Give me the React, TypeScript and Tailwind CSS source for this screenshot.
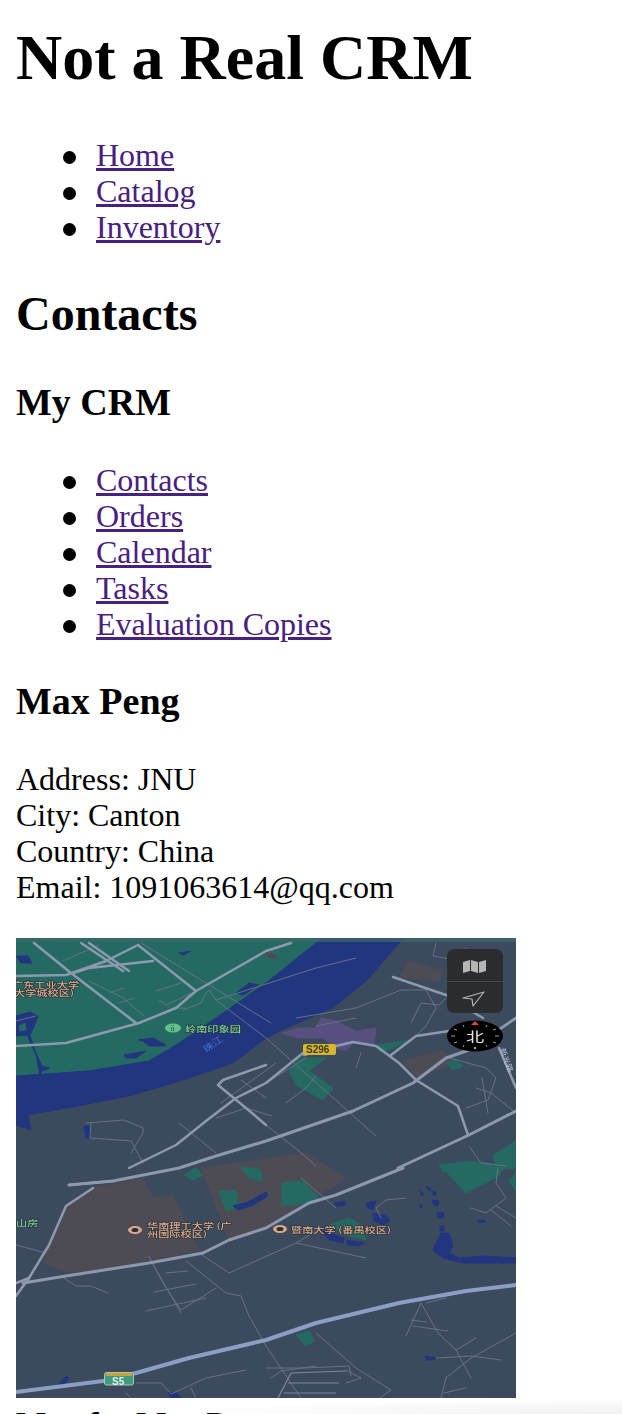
const LINK = "text-[#48207f] underline";
const LI = "relative before:absolute before:top-[14px] before:left-[-33px] before:h-[13px] before:w-[13px] before:rounded-full before:bg-black before:content-['']";

const Roads = ({ d, w = 1, c = "#667285" }: { d: string[]; w?: number; c?: string }) => (
  <g fill="none" stroke={c} strokeWidth={w} strokeLinecap="round" strokeLinejoin="round">
    {d.map((p, i) => (
      <polyline key={i} points={p} />
    ))}
  </g>
);

const Fill = ({ d, c }: { d: string[]; c: string }) => (
  <g fill={c} stroke={c} strokeWidth="1" strokeLinejoin="round">
    {d.map((p, i) => (
      <polygon key={i} points={p} />
    ))}
  </g>
);

const Label = ({ x, y, t, c = "#dcae8c", s = 8 }: { x: number; y: number; t: string; c?: string; s?: number }) => (
  <text
    transform={`translate(${x} ${y}) scale(1.4 1)`}
    fontSize={s}
    fontWeight={500}
    fill={c}
    stroke="#2b3038"
    strokeWidth={1.1}
    paintOrder="stroke"
    className="font-['Noto_Sans_CJK_SC','Noto_Sans',sans-serif]"
  >
    {t}
  </text>
);

function MapPicture() {
  return (
    <svg viewBox="0 0 500 460" className="block h-[460px] w-[500px]">
      <rect width="500" height="460" fill="#3c4a5e" />
      <Fill
        c="#256a62"
        d={[
          "0,0 305,0 300,5 250,45 200,80 160,107 133,123 73,133 0,138",
          "283,120 310,120 293,133 317,150 307,162 280,147 273,133",
          "362,107 393,102 373,112 364,114",
          "477,217 500,203 500,230 480,228",
          "423,227 457,223 500,230 427,234",
        ]}
      />
      <Fill
        c="#4d4c55"
        d={[
          "127,240 137,260 157,258 183,313 133,323 57,335 27,325 50,268 77,250",
          "185,230 290,215 330,240 250,290 212,300 200,268",
          "393,23 427,33 423,43 383,40",
          "387,123 427,113 440,125 400,140",
          "250,14 262,18 258,21 250,18",
        ]}
      />
      <Fill
        c="#256a62"
        d={[
          "427,230 487,230 483,238 450,255",
          "493,243 500,235 500,253",
          "313,287 333,280 345,287 350,302 333,298",
          "280,397 293,393 298,403 290,408",
          "168,237 180,230 187,237 177,242",
          "203,253 220,253 223,270 210,273",
          "225,230 243,230 247,243 233,240",
          "266,245 287,243 303,260 283,267 266,267",
          "430,125 440,122 447,128 437,132",
        ]}
      />
      <Fill
        c="#574f80"
        d={[
          "305,80 320,83 340,93 360,90 358,107 337,105 330,113 320,110 307,100 283,100 265,95 283,90 300,90",
        ]}
      />
      <Fill
        c="#22357f"
        d={[
          "0,138 73,133 133,123 160,107 200,80 250,45 300,5 305,0 390,0 383,5 350,43 317,70 270,90 250,100 217,125 167,142 117,157 67,167 12,177 15,192 0,187",
          "0,78 14,74 22,78 19,86 14,97 19,113 26,128 34,130 26,133 24,137 20,117 11,97 0,98",
          "108,117 130,113 120,120 110,120",
          "122,102 137,100 150,107 147,108 133,108 127,103",
          "220,55 233,45 243,47 227,57",
          "163,15 175,13 167,17",
          "68,188 73,188 75,200 70,200",
          "42,447 50,438 53,440 48,447 40,448",
          "417,312 425,295 433,295 437,308 433,315 443,320 467,318 500,320 500,325 477,325 447,325 427,320",
          "357,275 370,278 374,283 367,287 358,283",
          "350,265 360,263 357,272 352,270",
          "319,265 330,263 328,268 320,268",
          "307,293 328,300 327,305 313,302",
          "330,302 348,305 343,308 332,307",
          "409,418 421,420 416,422 410,422",
          "410,248 415,250 413,253",
          "415,253 421,255 418,258",
          "416,262 423,263 422,268 418,267",
          "421,274 428,275 428,280 422,280",
          "424,288 428,288 428,293 424,293",
          "404,253 408,256 406,258",
          "403,266 407,268 404,270",
          "461,282 470,283 465,285",
          "217,268 232,264 250,254 252,258 235,268 222,272",
          "152,454 162,456 165,460 155,460",
          "0,18 12,18 16,25 5,25",
        ]}
      />
      <Fill c="#256a62" d={["3,88 9,85 10,92 4,93"]} />
      <rect width="500" height="4" fill="#3a6a6c" opacity="0.75" />

      <Roads
        d={[
          "125,5 255,85",
          "47,23 83,7",
          "73,43 107,60 128,78",
          "93,55 108,50",
          "103,65 118,60",
          "140,53 165,45",
          "143,62 150,67 165,60 175,55 160,70 170,70",
          "167,72 185,65 190,55 193,52 200,62 250,100 360,198",
          "200,62 300,30 340,20",
          "70,185 108,182 127,190 127,195 115,215",
          "75,185 74,200 115,203 127,225",
          "163,185 200,215",
          "250,145 290,120",
          "205,165 260,125",
          "225,142 250,160",
          "200,180 230,170 256,178",
          "250,187 283,213 300,228",
          "280,80 340,70 385,52 410,52 420,70 410,88 400,98",
          "300,88 340,80",
          "270,165 290,150 300,138",
          "340,130 345,115",
          "395,85 405,65 423,67 430,60",
          "420,5 417,18 440,22 450,10",
          "434,120 470,130 480,140 472,162 450,170",
          "466,140 472,175",
          "460,150 475,155 500,175",
          "453,208 465,225 490,228",
          "0,83 20,78",
          "0,307 30,315",
          "48,340 60,348 75,348 92,355",
          "133,318 135,323 165,375",
          "135,323 150,350 165,372 200,350",
          "138,354 180,346",
          "130,373 190,360",
          "150,335 172,333",
          "170,323 210,355 225,358 233,378 250,408",
          "183,315 213,335 280,305 305,290",
          "280,305 350,320",
          "250,408 285,460",
          "250,430 280,430 290,430 333,428 335,438",
          "300,395 340,430 375,452 350,470",
          "405,365 422,395 440,412 455,440",
          "405,365 390,398",
          "410,365 430,360",
          "395,382 410,384",
          "397,388 432,393",
          "440,412 460,400",
          "455,420 500,395",
          "420,420 455,418 485,422",
          "455,420 430,440 425,460",
          "428,455 450,450",
          "110,455 115,460",
          "120,445 145,445 155,456 190,440 230,432",
          "175,450 180,460",
          "255,440 265,433 300,428",
          "330,445 345,440 330,432",
          "482,230 480,245 490,260 470,275 455,270",
          "480,268 500,280",
          "475,272 495,288",
          "285,240 320,270",
          "390,260 370,262 360,270 365,280",
        ]}
      />
      <g fill="none" stroke="#7c889b" strokeWidth="1.2">
        <polyline points="262,460 275,435 330,433" />
        <polyline points="268,455 320,455" />
        <polyline points="272,445 323,445" />
      </g>
      <Roads
        w={2.5}
        c="#8d99ad"
        d={[
          "0,108 50,105 123,85 160,70 180,53 250,13 275,5",
          "0,38 50,37 90,23 122,7",
          "18,5 55,35 120,85",
          "57,35 73,30 137,23",
          "65,5 107,33",
          "73,5 113,33",
          "122,7 180,53",
          "250,127 207,142 202,147 230,170 250,187",
          "287,115 250,145 220,160 190,183 160,207 113,230",
          "288,117 320,108 337,104 360,108 383,125 400,142 442,168 452,197",
          "375,117 400,98 433,93 460,92",
          "377,39 433,58",
          "467,80 450,70",
          "483,110 500,150",
          "0,358 13,340 33,307 50,268 77,250",
          "53,247 97,243",
          "0,345 13,340",
        ]}
      />
      <Roads
        w={3}
        c="#8b98ae"
        d={[
          "7,345 50,338 133,325 187,315 213,302 250,290 293,265 320,257 387,230",
          "53,247 97,243 163,230 200,218 250,203 337,173 397,145 430,120 453,112 500,80",
          "382,230 453,197 500,173",
        ]}
      />
      <Roads w={4} c="#8c9ec4" d={["0,454 87,443 120,435 173,420 250,402 300,385 383,365 450,353 500,347"]} />

      <Label x={-4} y={50} t="广东工业大学" />
      <Label x={-2} y={58} t="大学城校区)" />
      <ellipse cx="157" cy="90" rx="8" ry="4.5" fill="#62c08a" />
      <text x="153" y="93" fontSize="7" fill="#1f4a45" className="font-['Noto_Sans_CJK_SC',sans-serif]">
        ⅱ
      </text>
      <Label x={169} y={94} t="岭南印象园" c="#75d3a0" />
      <text
        transform="translate(190 115) rotate(-35) scale(1.2 1)"
        fontSize="9"
        fill="#4a6fe0"
        className="font-['Noto_Sans_CJK_SC',sans-serif]"
      >
        珠江
      </text>
      <rect x="287" y="106" width="33" height="11" rx="2" fill="#d6b62f" />
      <text x="290" y="115" fontSize="10" fontWeight="700" fill="#3c3a20" className="font-['Liberation_Sans',sans-serif]">
        S296
      </text>
      <ellipse cx="264" cy="291" rx="7" ry="4" fill="#d9a987" />
      <ellipse cx="264" cy="291" rx="3.5" ry="2" fill="#2b3038" />
      <Label x={275} y={295} t="暨南大学 (番禺校区)" />
      <ellipse cx="119" cy="292" rx="7" ry="4" fill="#d9a987" />
      <ellipse cx="119" cy="292" rx="3.5" ry="2" fill="#2b3038" />
      <Label x={131} y={291} t="华南理工大学 (广" />
      <Label x={131} y={299} t="州国际校区)" />
      <Label x={0} y={288} t="山房" c="#6fcf97" />
      <text
        transform="translate(484 111) rotate(70) scale(1.2 1)"
        fontSize="7"
        fill="#b9c2d2"
        className="font-['Noto_Sans_CJK_SC',sans-serif]"
      >
        新光路
      </text>
      <rect x="88.5" y="434.5" width="29" height="12.5" rx="2" fill="#3f9a80" stroke="#a8c6bd" />
      <rect x="90" y="435" width="26" height="3" fill="#c9a23a" />
      <text x="96" y="446.5" fontSize="10" fontWeight="700" fill="#e6efe9" className="font-['Liberation_Sans',sans-serif]">
        S5
      </text>

      <rect x="431" y="11" width="56" height="64" rx="7" fill="#2b2c2f" />
      <line x1="431" y1="43.5" x2="487" y2="43.5" stroke="#45464a" />
      <g fill="#b5b5b5">
        <polygon points="447,24 454,22 454,33 447,35" />
        <polygon points="455,22 462,24 462,35 455,33" />
        <polygon points="463,24 470,22 470,33 463,35" />
      </g>
      <polygon points="447,60 468,54 457,68 456,61" fill="none" stroke="#b5b5b5" strokeWidth="1.2" strokeLinejoin="round" />
      <ellipse cx="459" cy="98" rx="28" ry="15.5" fill="#000" />
      <polygon points="459,83 463,87 455,87" fill="#e8402f" />
      <g stroke="#9c9c9c" strokeWidth="1">
        <line x1="435" y1="98" x2="439" y2="98" />
        <line x1="479" y1="98" x2="483" y2="98" />
        <line x1="438" y1="91" x2="441" y2="92" />
        <line x1="477" y1="92" x2="480" y2="91" />
        <line x1="438" y1="105" x2="441" y2="104" />
        <line x1="477" y1="104" x2="480" y2="105" />
        <line x1="447" y1="87" x2="448" y2="89" />
        <line x1="471" y1="87" x2="470" y2="89" />
        <line x1="447" y1="109" x2="448" y2="107" />
        <line x1="471" y1="109" x2="470" y2="107" />
      </g>
      <circle cx="459" cy="110" r="1" fill="#ddd" />
      <text
        transform="translate(459 103) scale(1.4 1)"
        textAnchor="middle"
        fontSize="13"
        fill="#e8e8e8"
        className="font-['Noto_Sans_CJK_SC',sans-serif]"
      >
        北
      </text>
    </svg>
  );
}

export default function App() {
  return (
    <div className="relative h-[1414px] overflow-hidden bg-white px-4 pt-[22px] font-['Liberation_Serif','Times_New_Roman',serif] text-[32px] leading-[36px] text-black">
      <h1 className="text-[64px] leading-[72px] font-bold">Not a Real CRM</h1>
      <ul className="mt-[43px] list-none pl-[80px]">
        <li className={LI}><a className={LINK}>Home</a></li>
        <li className={LI}><a className={LINK}>Catalog</a></li>
        <li className={LI}><a className={LINK}>Inventory</a></li>
      </ul>
      <h2 className="mt-[42px] text-[48px] leading-[54px] font-bold">Contacts</h2>
      <h3 className="mt-[40px] text-[38px] leading-[42px] font-bold">My CRM</h3>
      <ul className="mt-[39px] list-none pl-[80px]">
        <li className={LI}><a className={LINK}>Contacts</a></li>
        <li className={LI}><a className={LINK}>Orders</a></li>
        <li className={LI}><a className={LINK}>Calendar</a></li>
        <li className={LI}><a className={LINK}>Tasks</a></li>
        <li className={LI}><a className={LINK}>Evaluation Copies</a></li>
      </ul>
      <h3 className="mt-[38px] text-[38px] leading-[42px] font-bold">Max Peng</h3>
      <div className="mt-[39px]">
        <div>Address: JNU</div>
        <div>City: Canton</div>
        <div>Country: China</div>
        <div>Email: 1091063614@qq.com</div>
      </div>
      <div className="mt-[33px] blur-[0.5px]">
        <MapPicture />
      </div>
      <h4 className="mt-[7px] font-bold">Map for Max Peng</h4>
      <div className="pointer-events-none absolute right-0 bottom-0 h-[16px] w-[440px] bg-[radial-gradient(ellipse_at_bottom_right,#f0f0f0,rgba(255,255,255,0)_70%)]" />
    </div>
  );
}
